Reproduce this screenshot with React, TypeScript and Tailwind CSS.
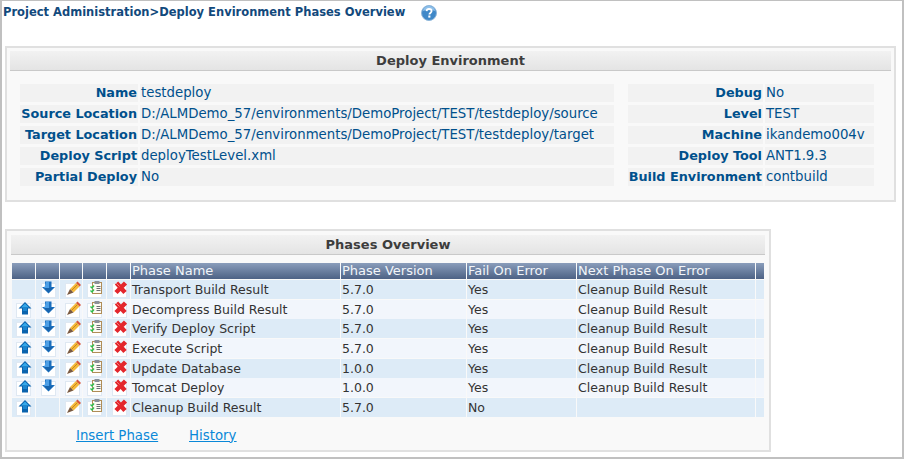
const fields = [
  ["Name", "testdeploy"],
  ["Source Location", "D:/ALMDemo_57/environments/DemoProject/TEST/testdeploy/source"],
  ["Target Location", "D:/ALMDemo_57/environments/DemoProject/TEST/testdeploy/target"],
  ["Deploy Script", "deployTestLevel.xml"],
  ["Partial Deploy", "No"],
];

const sideFields = [
  ["Debug", "No"],
  ["Level", "TEST"],
  ["Machine", "ikandemo004v"],
  ["Deploy Tool", "ANT1.9.3"],
  ["Build Environment", "contbuild"],
];

const phases = [
  { name: "Transport Build Result", version: "5.7.0", fail: "Yes", next: "Cleanup Build Result", up: false, down: true },
  { name: "Decompress Build Result", version: "5.7.0", fail: "Yes", next: "Cleanup Build Result", up: true, down: true },
  { name: "Verify Deploy Script", version: "5.7.0", fail: "Yes", next: "Cleanup Build Result", up: true, down: true },
  { name: "Execute Script", version: "5.7.0", fail: "Yes", next: "Cleanup Build Result", up: true, down: true },
  { name: "Update Database", version: "1.0.0", fail: "Yes", next: "Cleanup Build Result", up: true, down: true },
  { name: "Tomcat Deploy", version: "1.0.0", fail: "Yes", next: "Cleanup Build Result", up: true, down: true },
  { name: "Cleanup Build Result", version: "5.7.0", fail: "No", next: "", up: true, down: false },
];

const cols = "grid-cols-[23px_23px_22px_23px_23px_209px_125px_109px_178px_8px]";

function IconBox() {
  return <rect x="0.5" y="2.5" width="14" height="14" fill="#fff" stroke="#dfe8f2" />;
}

function UpIcon() {
  return (
    <svg width="18" height="18" viewBox="0 0 18 18">
      <IconBox />
      <path d="M9 1 15.500 7.500H12V13.500H6V7.500H2.500z" fill="#0a63ad" />
      <path d="M9 2.500 13 6.500H5z" fill="#35a8ea" />
      <path d="M7 7h4v3H7z" fill="#1b86d0" />
    </svg>
  );
}

function DownIcon() {
  return (
    <svg width="18" height="18" viewBox="0 0 18 18">
      <IconBox />
      <path d="M4 0.500H10.500V6H14L7.500 12.500 1 6H4z" fill="#1a6fbe" />
      <path d="M5 1H8V7.500H3z" fill="#4d9fe6" />
      <path d="M3 7H12L7.500 11.500z" fill="#1764ad" />
    </svg>
  );
}

function EditIcon() {
  return (
    <svg width="18" height="18" viewBox="0 0 18 18">
      <IconBox />
      <path d="M5 8 11 2 14.500 5.500 8.500 11.500z" fill="#f4b93a" />
      <path d="M11 2 12.500 0.500 16 4 14.500 5.500z" fill="#d8553a" />
      <path d="M6.500 9.500 12.500 3.500" stroke="#c8871c" strokeWidth="1" />
      <path d="M5 8 8.500 11.500 2 14z" fill="#7a5a42" />
    </svg>
  );
}

function ListIcon() {
  return (
    <svg width="18" height="18" viewBox="0 0 18 18">
      <IconBox />
      <rect x="5.500" y="1.500" width="9" height="11" fill="#fdfaf2" stroke="#b08d57" />
      <rect x="7.500" y="0" width="5" height="3" fill="#8a9099" />
      <path d="M9.500 5.500h4M9.500 7.500h4M9.500 9.500h4" stroke="#6a6e73" strokeWidth="1" />
      <path d="M3.500 5.500 5 7l2-2.500M3.500 9.500 5 11l2-2.500" stroke="#2ec04f" strokeWidth="1.400" fill="none" />
    </svg>
  );
}

function DeleteIcon() {
  return (
    <svg width="18" height="18" viewBox="0 0 18 18">
      <IconBox />
      <path d="M4.500 2 13 11.500M13.500 2 4 11.500" stroke="#e3262c" strokeWidth="4.500" />
      <path d="M4 2 7.500 5.500" stroke="#f8787a" strokeWidth="1" />
    </svg>
  );
}

function HelpIcon() {
  return (
    <svg width="16" height="16" viewBox="0 0 16 16">
      <circle cx="8" cy="8" r="7.500" fill="#3f88c8" stroke="#8eb6da" />
      <path d="M2 6a6 5 0 0 1 12 0 10 6 0 0 0-12 0z" fill="#8fc0ea" />
      <path d="M5.500 6.200C5.700 4.600 6.800 4 8 4c1.500 0 2.600.8 2.600 2.100 0 1.800-2.200 1.800-2.200 3.400" fill="none" stroke="#fff" strokeWidth="1.800" />
      <rect x="7.300" y="10.500" width="2.100" height="2.100" fill="#fff" />
    </svg>
  );
}

function Panel({ title, className, titleClass, children }: { title: string; className: string; titleClass: string; children: React.ReactNode }) {
  return (
    <div className={`border-2 border-[#e0e0e0] bg-[#f9f9f9] ${className}`}>
      <div className={`h-5 flex items-center justify-center border-b border-[#c9c9c9] bg-gradient-to-b from-[#f2f2f2] to-[#e4e4e4] text-[13px] font-bold text-[#3d3d3d] ${titleClass}`}>
        {title}
      </div>
      {children}
    </div>
  );
}

function FieldRow({ label, value, cols }: { label: string; value: string; cols: string }) {
  return (
    <div className={`grid ${cols} gap-x-[2px] h-[18px] leading-[18px]`}>
      <div className="bg-[#f2f2f2] text-right pr-[1px] text-[12.800px] font-bold text-[#00508c] whitespace-nowrap">{label}</div>
      <div className="bg-[#f2f2f2] pl-[1px] text-[13.300px] text-[#00508c] whitespace-nowrap">{value}</div>
    </div>
  );
}

export default function App() {
  return (
    <div className="w-[904px] h-[459px] overflow-hidden border-l-2 border-r-2 border-b-2 border-t border-[#c0c0c0] bg-white font-['DejaVu_Sans',sans-serif]">
      <div className="flex items-center h-[24px] pl-[1px] text-[11.500px] font-bold text-[#12497c]">
        <span>Project Administration&gt;Deploy Environment Phases Overview</span>
        <span className="ml-[16px] flex"><HelpIcon /></span>
      </div>

      <Panel title="Deploy Environment" className="mt-[21px] ml-[3px] w-[891px] h-[156px]" titleClass="mx-[3px] mt-[3px]">
        <div className="flex pl-[13px] pt-[13px]">
          <div className="flex flex-col gap-y-[3px]">
            {fields.map(([label, value]) => (
              <FieldRow key={label} label={label} value={value} cols="grid-cols-[118px_474px]" />
            ))}
          </div>
          <div className="ml-[14px] flex flex-col gap-y-[3px]">
            {sideFields.map(([label, value]) => (
              <FieldRow key={label} label={label} value={value} cols="grid-cols-[135px_109px]" />
            ))}
          </div>
        </div>
      </Panel>

      <Panel title="Phases Overview" className="mt-[27px] ml-[3px] w-[766px] h-[223px]" titleClass="mx-[4px] mt-[4px]">
        <div className="ml-[5px] mt-[8px] w-[752px]">
          <div className={`grid ${cols} gap-x-[1px] h-4 text-[13px] text-[#f2f5f9] leading-4`}>
            {["", "", "", "", "", "Phase Name", "Phase Version", "Fail On Error", "Next Phase On Error", ""].map((h, i) => (
              <div key={i} className="bg-gradient-to-b from-[#8a9dbb] to-[#4d6285] pl-[1px] whitespace-nowrap overflow-hidden">{h}</div>
            ))}
          </div>
          <div className="flex flex-col gap-y-[1px] mt-[1px] text-[12.500px]">
            {phases.map((p, i) => (
              <div key={p.name} className={`grid ${cols} gap-x-[1px] h-[18.670px] leading-[19px] text-[#333] ${i % 2 === 0 ? "[&>div]:bg-[#ddebf7]" : "[&>div]:bg-[#f2f6fc]"}`}>
                <div className="pl-[4px] pt-[1px]">{p.up && <UpIcon />}</div>
                <div className="pl-[5px] pt-[1px]">{p.down && <DownIcon />}</div>
                <div className="pl-[5px] pt-[1px]"><EditIcon /></div>
                <div className="pl-[4px] pt-[1px]"><ListIcon /></div>
                <div className="pl-[5px] pt-[1px]"><DeleteIcon /></div>
                <div className="pl-[1px] whitespace-nowrap">{p.name}</div>
                <div className="pl-[1px]">{p.version}</div>
                <div className="pl-[1px]">{p.fail}</div>
                <div className="pl-[1px] whitespace-nowrap">{p.next}</div>
                <div />
              </div>
            ))}
          </div>
          <div className="flex pl-[64px] pt-[9px] gap-x-[31px] text-[13.300px] text-[#0a88d8] underline">
            <a href="#">Insert Phase</a>
            <a href="#">History</a>
          </div>
        </div>
      </Panel>
    </div>
  );
}
